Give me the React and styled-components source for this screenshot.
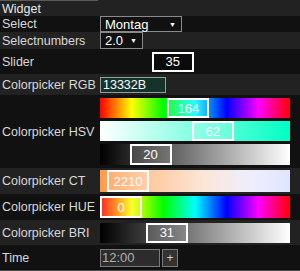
import React from 'react';
import styled, { createGlobalStyle } from 'styled-components';

const GlobalStyle = createGlobalStyle`
  html, body {
    margin: 0;
    padding: 0;
    background: #111;
    font-family: "Liberation Sans", Arial, sans-serif;
  }
`;

const KNOB_W = 42;

const gradients = {
  hue: 'linear-gradient(to right, #f00 0%, #ff0 16.6%, #0f0 33.3%, #0ff 50%, #00f 66.6%, #f0f 83.3%, #f00 100%)',
  sat: 'linear-gradient(to right, #fff, #00ffc4)',
  bri: 'linear-gradient(to right, #000, #fff)',
  ct: 'linear-gradient(to right, #ff9a4c 0%, #ffc89c 25%, #fbe6d8 55%, #eeeeff 80%, #dfe5ff 100%)',
  none: 'transparent',
};

const Panel = styled.div`
  width: 300px;
  height: 271px;
  overflow: hidden;
  background: #111;
  color: #ddd;
  font-size: 12.5px;
  border-bottom: 1px solid #4a4a4a;
  box-sizing: border-box;
`;

const Row = styled.div`
  display: flex;
  align-items: center;
  height: ${({ $h }) => $h}px;
  background: ${({ $dark }) => ($dark ? '#111' : '#222')};
`;

const Label = styled.div`
  width: 98px;
  flex: none;
  padding-left: 2px;
  box-sizing: border-box;
  white-space: nowrap;
  color: ${({ $head }) => ($head ? '#e6e6e6' : '#d8d8d8')};
  align-self: stretch;
  display: flex;
  align-items: center;
  border-top: ${({ $head }) => ($head ? '1px solid #5a5a5a' : 'none')};
`;

const Value = styled.div`
  flex: 1;
  padding-left: 2px;
  padding-right: 10px;
  display: flex;
  flex-direction: column;
  gap: 3px;
`;

const SelectBox = styled.div`
  width: ${({ $w }) => $w}px;
  height: ${({ $h }) => $h}px;
  box-sizing: border-box;
  border: 1px solid #8a8a8a;
  background: #111;
  color: #fff;
  font-size: 13px;
  display: flex;
  align-items: center;
  justify-content: space-between;
  padding: 0 5px 0 4px;
`;

const Arrow = styled.span`
  font-size: 7px;
  color: #fff;
`;

const ColorInput = styled.div`
  width: 66px;
  height: 16px;
  box-sizing: border-box;
  border: 1px solid #9a9a9a;
  background: #13332b;
  color: #fff;
  font-size: 12.5px;
  line-height: 14px;
  padding-left: 2px;
`;

const Bar = styled.div`
  position: relative;
  height: ${({ $h }) => $h || 20}px;
  background: ${({ $kind }) => gradients[$kind]};
`;

const Knob = styled.div`
  position: absolute;
  top: 0;
  bottom: 0;
  width: ${KNOB_W}px;
  box-sizing: border-box;
  border: 2px solid #fff;
  background: ${({ $solid }) => ($solid ? '#0b0b0b' : 'rgba(255,255,255,0.14)')};
  color: #fff;
  font-size: 13px;
  display: flex;
  align-items: center;
  justify-content: center;
`;

const TimeGroup = styled.div`
  display: flex;
  gap: 2px;
`;

const TimeInput = styled.div`
  width: 60px;
  height: 18px;
  box-sizing: border-box;
  border: 1px solid #7a7a7a;
  background: #2c2c2c;
  color: #b0b0b0;
  font-size: 13px;
  line-height: 16px;
  padding-left: 1px;
`;

const PlusButton = styled.div`
  width: 16px;
  height: 18px;
  box-sizing: border-box;
  border: 1px solid #7a7a7a;
  background: #333;
  color: #ccc;
  font-size: 12px;
  display: flex;
  align-items: center;
  justify-content: center;
`;

const Slide = ({ kind, value, min = 0, max = 100, h, solid, label }) => {
  const width = 190;
  const left = ((value - min) / (max - min)) * (width - KNOB_W);
  return (
    <Bar $kind={kind} $h={h}>
      <Knob $solid={solid} style={{ left }}>
        {label ?? value}
      </Knob>
    </Bar>
  );
};

export default function App() {
  return (
    <>
      <GlobalStyle />
      <Panel>
        <Row $h={16}>
          <Label $head>Widget</Label>
        </Row>
        <Row $h={16} $dark>
          <Label>Select</Label>
          <Value>
            <SelectBox $w={82} $h={16}>
              Montag <Arrow>▼</Arrow>
            </SelectBox>
          </Value>
        </Row>
        <Row $h={17}>
          <Label>Selectnumbers</Label>
          <Value>
            <SelectBox $w={43} $h={17}>
              2.0 <Arrow>▼</Arrow>
            </SelectBox>
          </Value>
        </Row>
        <Row $h={25} $dark>
          <Label>Slider</Label>
          <Value>
            <Slide kind="none" value={35} solid />
          </Value>
        </Row>
        <Row $h={21}>
          <Label>Colorpicker RGB</Label>
          <Value>
            <ColorInput>13332B</ColorInput>
          </Value>
        </Row>
        <Row $h={73} $dark>
          <Label>Colorpicker HSV</Label>
          <Value>
            <Slide kind="hue" value={164} max={360} />
            <Slide kind="sat" value={62} />
            <Slide kind="bri" value={20} h={21} />
          </Value>
        </Row>
        <Row $h={26}>
          <Label>Colorpicker CT</Label>
          <Value>
            <Slide kind="ct" value={2210} min={2000} max={6500} h={22} />
          </Value>
        </Row>
        <Row $h={26} $dark>
          <Label>Colorpicker HUE</Label>
          <Value>
            <Slide kind="hue" value={0} max={360} h={22} />
          </Value>
        </Row>
        <Row $h={25}>
          <Label>Colorpicker BRI</Label>
          <Value>
            <Slide kind="bri" value={31} />
          </Value>
        </Row>
        <Row $h={25} $dark>
          <Label>Time</Label>
          <Value>
            <TimeGroup>
              <TimeInput>12:00</TimeInput>
              <PlusButton>+</PlusButton>
            </TimeGroup>
          </Value>
        </Row>
      </Panel>
    </>
  );
}
